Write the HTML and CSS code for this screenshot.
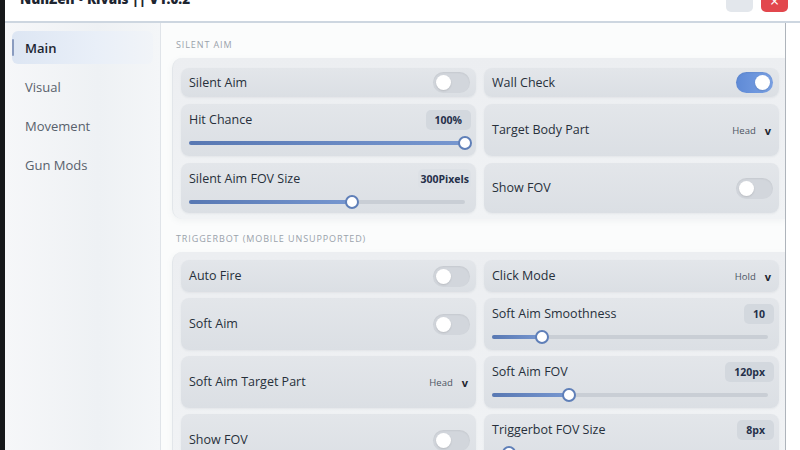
FILE: index.html
```html
<!DOCTYPE html>
<html>
<head>
<meta charset="utf-8">
<link rel="stylesheet" href="styles.css">
</head>
<body>
<div class="edge"></div>
<div class="window">
  <div class="titlebar">
    <span class="title">NullZen • Rivals || V1.0.2</span>
    <div class="winbtns">
      <div class="wbtn min"></div>
      <div class="wbtn close">×</div>
    </div>
  </div>
  <div class="body">
    <nav class="sidebar">
      <div class="nav-item active">Main</div>
      <div class="nav-item">Visual</div>
      <div class="nav-item">Movement</div>
      <div class="nav-item">Gun Mods</div>
    </nav>
    <main class="main">
      <div class="section-title first">SILENT AIM</div>
      <div class="panel p1">
        <div class="item row-s"><span class="label">Silent Aim</span><span class="toggle"></span></div>
        <div class="item row-s"><span class="label">Wall Check</span><span class="toggle on"></span></div>
        <div class="item slider-item">
          <div class="top"><span class="label">Hit Chance</span><span class="badge">100%</span></div>
          <div class="slider"><div class="track"><div class="fill" style="width:100%"></div></div><span class="thumb" style="left:100%"></span></div>
        </div>
        <div class="item row-s"><span class="label">Target Body Part</span><span class="dd">Head<b>v</b></span></div>
        <div class="item slider-item">
          <div class="top"><span class="label">Silent Aim FOV Size</span><span class="badge plain">300Pixels</span></div>
          <div class="slider"><div class="track"><div class="fill" style="width:59%"></div></div><span class="thumb" style="left:59%"></span></div>
        </div>
        <div class="item row-s"><span class="label">Show FOV</span><span class="toggle"></span></div>
      </div>
      <div class="section-title second">TRIGGERBOT (MOBILE UNSUPPORTED)</div>
      <div class="panel p2">
        <div class="item row-s"><span class="label">Auto Fire</span><span class="toggle"></span></div>
        <div class="item row-s"><span class="label">Click Mode</span><span class="dd">Hold<b>v</b></span></div>
        <div class="item row-s"><span class="label">Soft Aim</span><span class="toggle"></span></div>
        <div class="item slider-item">
          <div class="top"><span class="label">Soft Aim Smoothness</span><span class="badge">10</span></div>
          <div class="slider"><div class="track"><div class="fill" style="width:18%"></div></div><span class="thumb" style="left:18%"></span></div>
        </div>
        <div class="item row-s"><span class="label">Soft Aim Target Part</span><span class="dd">Head<b>v</b></span></div>
        <div class="item slider-item">
          <div class="top"><span class="label">Soft Aim FOV</span><span class="badge">120px</span></div>
          <div class="slider"><div class="track"><div class="fill" style="width:28%"></div></div><span class="thumb" style="left:28%"></span></div>
        </div>
        <div class="item row-s"><span class="label">Show FOV</span><span class="toggle"></span></div>
        <div class="item slider-item">
          <div class="top"><span class="label">Triggerbot FOV Size</span><span class="badge">8px</span></div>
          <div class="slider"><div class="track"><div class="fill" style="width:6%"></div></div><span class="thumb" style="left:6%"></span></div>
        </div>
      </div>
    </main>
  </div>
</div>
</body>
</html>
```

FILE: styles.css
```css
* { box-sizing: border-box; }
html, body { margin: 0; padding: 0; }
body {
  width: 800px;
  height: 450px;
  overflow: hidden;
  display: flex;
  background: #ffffff;
  font-family: "Open Sans", "DejaVu Sans", sans-serif;
  color: #27303b;
}
.edge { width: 5px; background: #16181a; flex: none; }
.window { flex: 1; display: flex; flex-direction: column; min-width: 0; }

.titlebar {
  height: 23px;
  flex: none;
  border-bottom: 2px solid #cdd6e0;
  display: flex;
  align-items: flex-end;
  padding-left: 15px;
  background: #ffffff;
}
.title {
  font-size: 13.5px;
  font-weight: 800;
  line-height: 14px;
  color: #1d2530;
  margin-bottom: 15px;
}
.winbtns { margin-left: auto; display: flex; gap: 8px; margin-right: 12px; margin-bottom: 9px; }
.wbtn {
  width: 27px; height: 26px; border-radius: 5px;
  display: flex; align-items: flex-end; justify-content: center;
  color: #fff; font-size: 16px; line-height: 16px; padding-bottom: 3px;
}
.wbtn.min { background: #e3e7ec; }
.wbtn.close { background: #e2474d; }

.body { flex: 1; display: flex; min-height: 0; }
.sidebar {
  width: 156px; flex: none;
  border-right: 1px solid #e0e4e9;
  padding-top: 8px;
  background: linear-gradient(90deg, #f6f7f9 0%, #eef1f4 60%, #f4f6f8 100%);
}
.nav-item {
  height: 33px;
  margin: 0 7px 6px 7px;
  padding-left: 13px;
  display: flex; align-items: center;
  font-size: 13px;
  color: #58616c;
  border-radius: 6px;
  position: relative;
}
.nav-item.active {
  background: linear-gradient(90deg, #dde6f3 0%, #e9eff8 60%, #f1f4f8 100%);
  color: #1c2530;
  font-weight: 600;
}
.nav-item.active::before {
  content: "";
  position: absolute;
  left: 0; top: 8px;
  width: 2px; height: 17px;
  border-radius: 1px;
  background: #8a9cc0;
}

.main {
  flex: none;
  width: 625px;
  padding-left: 11px;
  border-right: 1px solid #aeb4bb;
  background: #fbfcfc;
  overflow: hidden;
}
.section-title {
  font-size: 9px;
  letter-spacing: 0.9px;
  color: #9aa2ab;
  line-height: 10px;
  padding-left: 4px;
  margin: 13px 0 8px 0;
}
.section-title.first { margin-top: 17px; }
.section-title.second { margin-top: 15px; }

.panel {
  display: grid;
  grid-template-columns: 295px 295px;
  column-gap: 8px;
  row-gap: 6px;
  padding: 10px 7px 6px 8px;
  border-radius: 10px 0 0 10px;
  border-left: 1px solid #e2e6ea;
  background: linear-gradient(180deg, #eceef1 0%, #f1f3f5 100%);
  box-shadow: 0 2px 6px rgba(120, 130, 145, 0.08);
}
.p1 { grid-template-rows: 29px 52px 50px; row-gap: 7px; }
.p2 { padding-top: 8px; grid-template-rows: 32px 52px 52px 52px; }

.item {
  border-radius: 8px;
  background: linear-gradient(180deg, #e3e6ea 0%, #dbdfe4 100%);
  box-shadow: 0 1px 2px rgba(90, 100, 115, 0.08);
}
.row-s {
  display: flex; align-items: center; justify-content: space-between;
  padding: 0 6px 0 8px;
}
.label { font-size: 12.5px; color: #27303b; line-height: 20px; }

.toggle {
  width: 37px; height: 21px; border-radius: 11px;
  background: #d2d6dc;
  position: relative;
  box-shadow: inset 0 1px 2px rgba(0,0,0,0.06);
}
.toggle::after {
  content: "";
  position: absolute;
  top: 3px; left: 3px;
  width: 15px; height: 15px; border-radius: 50%;
  background: #ffffff;
  box-shadow: 0 1px 2px rgba(0,0,0,0.12);
}
.toggle.on { background: linear-gradient(90deg, #5f8ad6, #7aa1e4); }
.toggle.on::after { left: 19px; }

.dd { font-size: 9.5px; color: #4c5563; display: flex; align-items: center; margin-right: 0; }
.dd b { font-size: 11px; color: #1f2630; margin-left: 9px; margin-right: 2px; }

.slider-item { padding: 6px 5px 0 8px; }
.top { display: flex; align-items: center; justify-content: space-between; height: 20px; }
.badge {
  height: 20px; padding: 0 9px; border-radius: 5px;
  background: #d3d8de;
  font-size: 10.5px; font-weight: 700; color: #25304a;
  display: flex; align-items: center;
}
.badge.plain { background: #dde1e6; padding: 0 2px; }
.slider { position: relative; height: 14px; margin-top: 6px; margin-right: 6px; display: flex; align-items: center; }
.track { width: 100%; height: 4px; border-radius: 2px; background: #c9ced5; overflow: hidden; }
.fill { height: 100%; background: linear-gradient(90deg, #5878b3, #7797d0); }
.thumb {
  position: absolute;
  top: 0;
  width: 14px; height: 14px;
  margin-left: -7px;
  border-radius: 50%;
  background: #ffffff;
  border: 2px solid #5f7fb8;
}
```
